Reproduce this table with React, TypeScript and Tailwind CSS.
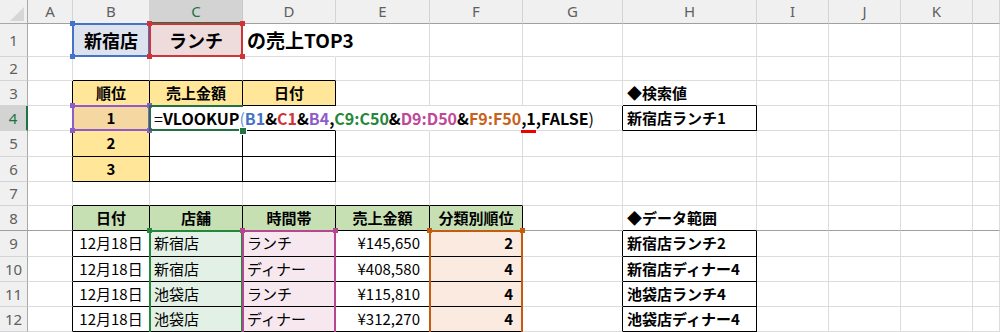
import React from 'react';

type CellDef = {
  text: React.ReactNode;
  bold?: boolean;
  align?: 'left' | 'center' | 'right';
  bg?: string;
  size?: string;
};

const COLS = ['A', 'B', 'C', 'D', 'E', 'F', 'G', 'H', 'I', 'J', 'K', ''];
const ROWS = [1, 2, 3, 4, 5, 6, 7, 8, 9, 10, 11, 12];

const TRACKS =
  'grid grid-cols-[28px_45px_77px_93px_93px_94px_93px_100px_134px_72px_72px_72px_27px] grid-rows-[24px_33px_24px_25px_25px_26px_25px_24px_25px_26px_25px_25px_25px]';

// boxes with thin black borders: [r1, r2, c1, c2], c: A=0
const boxes = [
  [3, 6, 1, 3],
  [8, 12, 1, 5],
  [4, 4, 7, 7],
  [9, 13, 7, 7],
];

const boxed = (r: number, c: number) =>
  boxes.some(([r1, r2, c1, c2]) => r >= r1 && r <= r2 && c >= c1 && c <= c2);

// right borders hidden by overflowing text
const noRight = ['D1', 'C4', 'D4', 'E4', 'F4'];

const Formula = () => (
  <span className="font-bold">
    <span className="font-normal">=</span>VLOOKUP
    <span className="font-normal text-[#5b9bd5]">(</span>
    <span className="text-[#4472c4]">B1</span>&amp;
    <span className="text-[#d13438]">C1</span>&amp;
    <span className="text-[#8e5cc9]">B4</span>,
    <span className="text-[#23883a]">C9:C50</span>&amp;
    <span className="text-[#c0479a]">D9:D50</span>&amp;
    <span className="text-[#c8611c]">F9:F50</span>
    <span className="relative">
      ,1
      <span className="absolute left-0 right-0 -bottom-[3px] h-[3px] bg-[#f00000]" />
    </span>
    ,FALSE<span className="font-normal">)</span>
  </span>
);

const Y = 'bg-[#ffe699]';
const G = 'bg-[#c6e0b4]';
const TG = 'bg-[#e3f0e5]';
const TM = 'bg-[#f7e8f0]';
const TO = 'bg-[#fbeadf]';

const cells: Record<string, CellDef> = {
  B1: { text: '新宿店', bold: true, align: 'center', bg: 'bg-[#dde3ee]', size: 'text-[18px]' },
  C1: { text: 'ランチ', bold: true, align: 'center', bg: 'bg-[#eedcdc]', size: 'text-[18px]' },
  D1: { text: 'の売上TOP3', bold: true, size: 'text-[19px]' },
  B3: { text: '順位', bold: true, align: 'center', bg: Y },
  C3: { text: '売上金額', bold: true, align: 'center', bg: Y },
  D3: { text: '日付', bold: true, align: 'center', bg: Y },
  H3: { text: '◆検索値', bold: true },
  B4: { text: '1', bold: true, align: 'center', bg: 'bg-[#f5d7a1]' },
  C4: { text: <Formula />, size: 'text-[16px]' },
  H4: { text: '新宿店ランチ1', bold: true },
  B5: { text: '2', bold: true, align: 'center', bg: Y },
  B6: { text: '3', bold: true, align: 'center', bg: Y },
  B8: { text: '日付', bold: true, align: 'center', bg: G },
  C8: { text: '店舗', bold: true, align: 'center', bg: G },
  D8: { text: '時間帯', bold: true, align: 'center', bg: G },
  E8: { text: '売上金額', bold: true, align: 'center', bg: G },
  F8: { text: '分類別順位', bold: true, align: 'center', bg: G },
  H8: { text: '◆データ範囲', bold: true },
};

const data = [
  ['新宿店', 'ランチ', '¥145,650', '2', '新宿店ランチ2'],
  ['新宿店', 'ディナー', '¥408,580', '4', '新宿店ディナー4'],
  ['池袋店', 'ランチ', '¥115,810', '4', '池袋店ランチ4'],
  ['池袋店', 'ディナー', '¥312,270', '4', '池袋店ディナー4'],
];
data.forEach((d, i) => {
  const r = 9 + i;
  cells['B' + r] = { text: '12月18日', align: 'center' };
  cells['C' + r] = { text: d[0], bg: TG };
  cells['D' + r] = { text: d[1], bg: TM };
  cells['E' + r] = { text: d[2], align: 'right' };
  cells['F' + r] = { text: d[3], bold: true, align: 'right', bg: TO };
  cells['H' + r] = { text: d[4], bold: true };
});

const Handle = ({ pos, color }: { pos: string; color: string }) => (
  <span className={`absolute size-[5px] ${pos} ${color}`} />
);

const TL = '-left-[4px] -top-[4px]';
const TR = '-right-[4px] -top-[4px]';
const BL = '-left-[4px] -bottom-[4px]';
const BR = '-right-[4px] -bottom-[4px]';

const Sheet: React.FC = () => (
  <div className={`${TRACKS} col-start-1 row-start-1`}>
    {/* corner */}
    <div className="bg-[#f0f0f0] border-r border-b border-r-[#a8a8a8] border-b-[#a8a8a8]">
      <svg width="27" height="23" viewBox="0 0 27 23">
        <polygon points="24,7 24,21 10,21" fill="#d6d6d6" />
      </svg>
    </div>
    {/* column headers */}
    {COLS.map((c) =>
      c === 'C' ? (
        <div
          key={'h' + c}
          className="flex items-center justify-center bg-[#d3d3d3] border-r border-b-2 border-r-[#c8c8c8] border-b-[#1f7244] font-['Noto_Sans',sans-serif] text-[15px] text-[#1f7244]"
        >
          {c}
        </div>
      ) : (
        <div
          key={'h' + c}
          className="flex items-center justify-center bg-[#f0f0f0] border-r border-b border-r-[#d4d4d4] border-b-[#a0a0a0] font-['Noto_Sans',sans-serif] text-[15px] text-[#5f5f5f]"
        >
          {c}
        </div>
      )
    )}
    {ROWS.map((r) => (
      <React.Fragment key={r}>
        {r === 4 ? (
          <div className="flex items-center justify-center bg-[#d3d3d3] border-r-2 border-b border-r-[#1f7244] border-b-[#d4d4d4] font-['Noto_Sans',sans-serif] text-[15px] text-[#1f7244]">
            {r}
          </div>
        ) : (
          <div
            className={`flex items-center justify-center bg-[#f0f0f0] border-r border-b border-r-[#a8a8a8] ${
              r === 8 ? 'border-b-[#a0a0a0]' : 'border-b-[#d4d4d4]'
            } font-['Noto_Sans',sans-serif] text-[15px] text-[#5f5f5f]`}
          >
            {r}
          </div>
        )}
        {COLS.map((c, ci) => {
          const id = c + r;
          const cell = c ? cells[id] : undefined;
          const right = noRight.includes(id)
            ? 'border-r-transparent'
            : boxed(r, ci) || boxed(r, ci + 1)
            ? 'border-r-black'
            : 'border-r-[#dcdcdc]';
          const bottom =
            boxed(r, ci) || boxed(r + 1, ci)
              ? 'border-b-black'
              : r === 8
              ? 'border-b-[#a0a0a0]'
              : 'border-b-[#dcdcdc]';
          const align =
            cell?.align === 'center'
              ? 'justify-center'
              : cell?.align === 'right'
              ? 'justify-end pr-[9px]'
              : 'justify-start pl-1';
          return (
            <div
              key={id + ci}
              className={`flex min-w-0 items-center whitespace-nowrap border-r border-b ${right} ${bottom} ${
                cell?.bg ?? ''
              } ${align} ${cell?.size ?? 'text-[15px]'} ${cell?.bold ? 'font-bold' : 'font-normal'}`}
            >
              {cell?.text}
            </div>
          );
        })}
      </React.Fragment>
    ))}
  </div>
);

// coloured reference ranges drawn over the sheet, on the same tracks
const Highlights: React.FC = () => (
  <div className={`${TRACKS} col-start-1 row-start-1 pointer-events-none`}>
    <div className="col-start-3 row-start-2 relative -ml-px -mt-px border-2 border-[#4472c4]">
      <Handle pos={TL} color="bg-[#4472c4]" />
      <Handle pos={BL} color="bg-[#4472c4]" />
    </div>
    <div className="col-start-4 row-start-2 relative -ml-px -mt-px border-2 border-[#d13438]">
      <Handle pos={TL} color="bg-[#d13438]" />
      <Handle pos={TR} color="bg-[#d13438]" />
      <Handle pos={BL} color="bg-[#d13438]" />
      <Handle pos={BR} color="bg-[#d13438]" />
    </div>
    <div className="col-start-3 row-start-5 relative -ml-px -mt-px border-2 border-[#8e5cc9]">
      <Handle pos={TL} color="bg-[#8e5cc9]" />
      <Handle pos={TR} color="bg-[#8e5cc9]" />
      <Handle pos={BL} color="bg-[#8e5cc9]" />
      <Handle pos={BR} color="bg-[#8e5cc9]" />
    </div>
    <div className="col-start-4 row-start-5 relative -ml-px -mt-px border-2 border-r-0 border-[#1f7244]">
      <span className="absolute -right-[3px] -bottom-[5px] size-[6px] bg-[#1f7244] outline outline-white" />
    </div>
    <div className="col-start-4 row-start-10 row-end-14 relative -ml-px -mt-px border-2 border-b-0 border-[#23883a]">
      <Handle pos={TL} color="bg-[#23883a]" />
      <Handle pos={TR} color="bg-[#23883a]" />
    </div>
    <div className="col-start-5 row-start-10 row-end-14 relative -ml-px -mt-px border-2 border-b-0 border-[#b5478f]">
      <Handle pos={TL} color="bg-[#b5478f]" />
      <Handle pos={TR} color="bg-[#b5478f]" />
    </div>
    <div className="col-start-7 row-start-10 row-end-14 relative -ml-px -mt-px border-2 border-b-0 border-[#c55a11]">
      <Handle pos={TL} color="bg-[#c55a11]" />
      <Handle pos={TR} color="bg-[#c55a11]" />
    </div>
  </div>
);

const App: React.FC = () => {
  return (
    <div className="grid w-[1000px] h-[332px] overflow-hidden bg-white font-['Noto_Sans_CJK_JP',sans-serif] text-black">
      <Sheet />
      <Highlights />
    </div>
  );
};

export default App;
